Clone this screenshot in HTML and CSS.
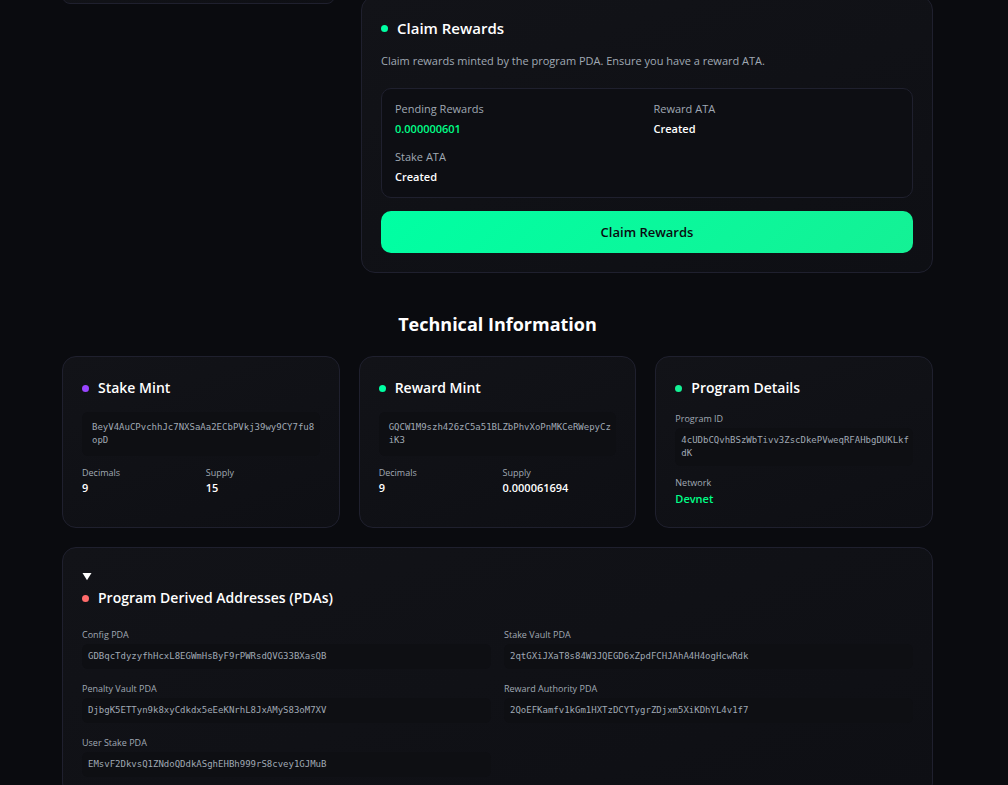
FILE: index.html
```html
<!DOCTYPE html>
<html lang="en">
<head>
<meta charset="utf-8">
<meta name="viewport" content="width=device-width, initial-scale=1">
<title>Staking Dashboard</title>
<link rel="stylesheet" href="styles.css">
</head>
<body>
<main class="page">
  <div class="actions">
    <aside class="card side-card"></aside>
    <div class="actions-main">
      <section class="card claim">
        <h2 class="card-title card-title-lg"><span class="dot dot-mint"></span>Claim Rewards</h2>
        <p class="claim-text">Claim rewards minted by the program PDA. Ensure you have a reward ATA.</p>
        <dl class="status">
          <div><dt>Pending Rewards</dt><dd class="positive">0.000000601</dd></div>
          <div><dt>Reward ATA</dt><dd>Created</dd></div>
          <div><dt>Stake ATA</dt><dd>Created</dd></div>
        </dl>
        <button class="claim-button" type="button">Claim Rewards</button>
      </section>
    </div>
  </div>

  <h2 class="section-title">Technical Information</h2>

  <div class="tech">
    <section class="card">
      <h3 class="card-title"><span class="dot dot-purple"></span>Stake Mint</h3>
      <code class="address address-lg">BeyV4AuCPvchhJc7NXSaAa2ECbPVkj39wy9CY7fu8opD</code>
      <dl class="facts">
        <div><dt>Decimals</dt><dd>9</dd></div>
        <div><dt>Supply</dt><dd>15</dd></div>
      </dl>
    </section>
    <section class="card">
      <h3 class="card-title"><span class="dot dot-mint"></span>Reward Mint</h3>
      <code class="address address-lg">GQCW1M9szh426zC5a51BLZbPhvXoPnMKCeRWepyCziK3</code>
      <dl class="facts">
        <div><dt>Decimals</dt><dd>9</dd></div>
        <div><dt>Supply</dt><dd>0.000061694</dd></div>
      </dl>
    </section>
    <section class="card">
      <h3 class="card-title"><span class="dot dot-green"></span>Program Details</h3>
      <dl class="program">
        <div><dt>Program ID</dt><dd><code class="address">4cUDbCQvhBSzWbTivv3ZscDkePVweqRFAHbgDUKLkfdK</code></dd></div>
        <div><dt>Network</dt><dd class="positive">Devnet</dd></div>
      </dl>
    </section>
  </div>

  <details class="card pdas" open>
    <summary>
      <svg class="marker" viewBox="0 0 10 8" aria-hidden="true"><path d="M0.5 0.5h9L5 7.8z"/></svg>
      <h3 class="card-title"><span class="dot dot-red"></span>Program Derived Addresses (PDAs)</h3>
    </summary>
    <dl class="pda-list">
      <div><dt>Config PDA</dt><dd><code class="address">GDBqcTdyzyfhHcxL8EGWmHsByF9rPWRsdQVG33BXasQB</code></dd></div>
      <div><dt>Stake Vault PDA</dt><dd><code class="address">2qtGXiJXaT8s84W3JQEGD6xZpdFCHJAhA4H4ogHcwRdk</code></dd></div>
      <div><dt>Penalty Vault PDA</dt><dd><code class="address">DjbgK5ETTyn9k8xyCdkdx5eEeKNrhL8JxAMyS83oM7XV</code></dd></div>
      <div><dt>Reward Authority PDA</dt><dd><code class="address">2QoEFKamfv1kGm1HXTzDCYTygrZDjxm5XiKDhYL4v1f7</code></dd></div>
      <div><dt>User Stake PDA</dt><dd><code class="address">EMsvF2DkvsQ1ZNdoQDdkASghEHBh999rS8cvey1GJMuB</code></dd></div>
    </dl>
  </details>
</main>
</body>
</html>
```
FILE: styles.css
```css
* { box-sizing: border-box; }

html {
  scrollbar-width: none;
  background: #0a0b0f;
}

body {
  margin: 0;
  font-family: "Open Sans", "Noto Sans", sans-serif;
  font-size: 11px;
  line-height: 16px;
  color: #ffffff;
}

h2, h3, p, dl, dd { margin: 0; }

.page {
  padding: 0 75px 20px 62px;
  overflow: hidden;
}

.card {
  padding: 19px;
  border: 1px solid #1f202e;
  border-radius: 14px;
  background: linear-gradient(160deg, #121318, #0e0f14);
}

.card-title {
  display: flex;
  align-items: center;
  gap: 9px;
  font-size: 14px;
  line-height: 24px;
  font-weight: 600;
}

.card-title-lg { font-size: 15px; }

.dot {
  width: 7px;
  height: 7px;
  border-radius: 50%;
}

.dot-mint { background: #00ffa3; }
.dot-green { background: #14f195; }
.dot-purple { background: #9945ff; }
.dot-red { background: #ff6b6b; }

.actions {
  display: grid;
  grid-template-columns: 273fr 572fr;
  gap: 26px;
  align-items: start;
  margin-top: -12px;
}

.side-card { padding: 7px; }

.actions-main { padding-top: 8px; }

.claim-text {
  margin-top: 13px;
  color: #a0a9b4;
}

.status {
  display: grid;
  grid-template-columns: 1fr 1fr;
  gap: 8px 13px;
  margin: 19px 0 13px;
  padding: 10px 13px;
  border: 1px solid #1f202e;
  border-radius: 10px;
  background: #0d0e13;
}

.status dt,
.status dd { line-height: 20px; }

dt { color: #a0a9b4; }

dd { font-weight: 600; }

.positive { color: #00ff88; }

.claim-button {
  display: block;
  width: 100%;
  height: 42px;
  border: 0;
  border-radius: 10px;
  background: linear-gradient(135deg, #00ffa3, #14f195);
  color: #0a0b0f;
  font: inherit;
  font-size: 13px;
  font-weight: 600;
}

.section-title {
  margin: 38px 0 19px;
  text-align: center;
  font-size: 18px;
  line-height: 26px;
  font-weight: 700;
}

.tech {
  display: grid;
  grid-template-columns: repeat(3, minmax(0, 1fr));
  gap: 19px;
  margin-bottom: 19px;
}

.address {
  display: block;
  margin-top: 1px;
  padding: 6px 2px 6px 6px;
  border-radius: 6px;
  background: #0e0f13;
  color: #a0a9b4;
  font-family: "DejaVu Sans Mono", monospace;
  font-size: 9px;
  line-height: 13px;
  font-weight: 400;
  word-break: break-all;
}

.address-lg {
  margin: 12px 0 9px;
  padding: 9px 2px 9px 10px;
}

.facts {
  display: grid;
  grid-template-columns: 1fr 1fr;
  gap: 10px;
}

.facts dt,
.program dt,
.pda-list dt { font-size: 9px; }

.facts dd { line-height: 13px; }

.program {
  display: grid;
  gap: 9px;
  margin-top: 11px;
  padding-bottom: 1px;
}

.pdas summary {
  display: block;
  cursor: pointer;
}

.marker {
  display: block;
  width: 10px;
  height: 19px;
  fill: #ffffff;
}

.pda-list {
  display: grid;
  grid-template-columns: 1fr 1fr;
  gap: 12px 13px;
  margin-top: 17px;
}
```
